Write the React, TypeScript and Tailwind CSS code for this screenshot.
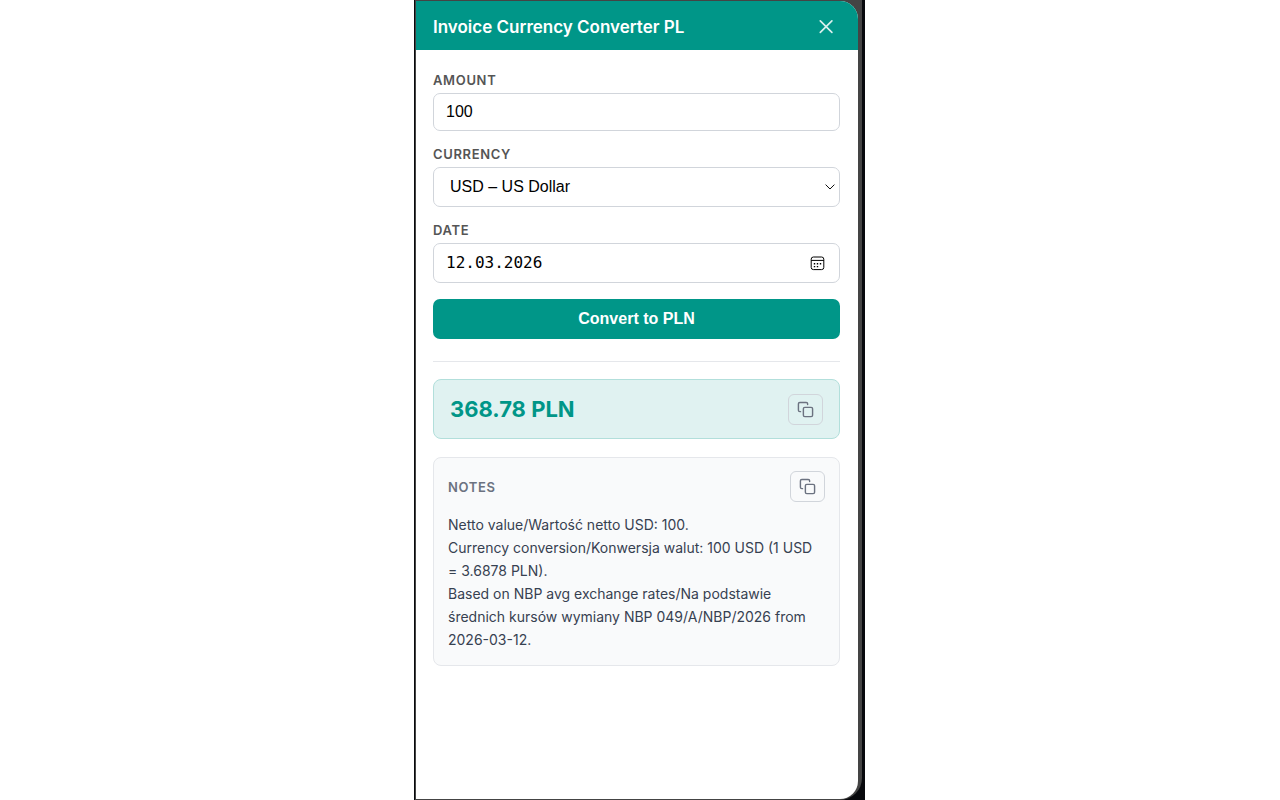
import { useState, type ReactNode } from "react";
import { FiCopy } from "react-icons/fi";

const NOTES = [
  "Netto value/Wartość netto USD: 100.",
  "Currency conversion/Konwersja walut: 100 USD (1 USD = 3.6878 PLN).",
  "Based on NBP avg exchange rates/Na podstawie średnich kursów wymiany NBP 049/A/NBP/2026 from 2026-03-12.",
];

function Field({ id, label, children }: { id: string; label: string; children: ReactNode }) {
  return (
    <div className="flex flex-col gap-[3px]">
      <label htmlFor={id} className="text-[13px] leading-5 font-semibold tracking-wider text-[#555555] uppercase">
        {label}
      </label>
      {children}
    </div>
  );
}

function CopyButton({ label }: { label: string }) {
  return (
    <button
      type="button"
      aria-label={label}
      className="flex h-[31px] w-[35px] shrink-0 items-center justify-center rounded-md border border-[#d1d5db] text-[#6b7280]"
    >
      <FiCopy className="size-[17px]" />
    </button>
  );
}

function CalendarIcon() {
  return (
    <svg viewBox="0 0 15 15" className="size-[15px]" fill="none" stroke="currentColor" aria-hidden="true">
      <rect x="1.2" y="1" width="12.6" height="12.6" rx="2.2" strokeWidth="1" />
      <path d="M1.2 4.4h12.6" strokeWidth="1" />
      <path d="M6.8 7.7h1.4M9.8 7.7h1.4M3.8 7.7h1.4M3.8 10.6h1.4M6.8 10.6h1.4" strokeWidth="1.4" />
    </svg>
  );
}

export default function App() {
  const [amount, setAmount] = useState("100");
  const [currency, setCurrency] = useState("USD");
  const [date, setDate] = useState("12.03.2026");

  return (
    <div className="flex min-h-screen justify-center bg-white pr-px font-['Inter',sans-serif]">
      <div className="flex w-full max-w-[451px] bg-[#08090d] pr-[3px] pl-px">
        <div className="flex w-full rounded-br-[22px] bg-[#444444] pt-px pr-1 pb-px pl-px">
          <main className="flex w-full flex-col overflow-hidden rounded-r-[18px] bg-white">
            <header className="flex h-[49px] items-center justify-between bg-[#009688] pt-[2px] pr-6 pl-[17px]">
              <h1 className="text-[17px] leading-7 font-semibold text-white">Invoice Currency Converter PL</h1>
              <button type="button" aria-label="Close" className="text-[#d9efed]">
                <svg viewBox="0 0 16 16" className="size-4" fill="none" stroke="currentColor" strokeWidth="1.7" strokeLinecap="round" aria-hidden="true">
                  <path d="M2.3 1.8l11.6 11.6M13.9 1.8L2.3 13.4" />
                </svg>
              </button>
            </header>

            <div className="flex flex-col pt-5 pr-[18px] pb-5 pl-[17px]">
              <form className="flex flex-col gap-[13px]" onSubmit={(e) => e.preventDefault()}>
                <Field id="amount" label="Amount">
                  <input
                    id="amount"
                    type="text"
                    inputMode="decimal"
                    value={amount}
                    onChange={(e) => setAmount(e.target.value)}
                    className="h-[38px] w-full rounded-[7px] border border-[#d1d5db] bg-white px-3 font-['Liberation_Sans',sans-serif] text-base text-black"
                  />
                </Field>

                <Field id="currency" label="Currency">
                  <div className="relative">
                    <select
                      id="currency"
                      value={currency}
                      onChange={(e) => setCurrency(e.target.value)}
                      className="block h-10 w-full appearance-none rounded-[7px] border border-[#d1d5db] bg-white px-4 font-['Liberation_Sans',sans-serif] text-base text-black"
                    >
                      <option value="USD">USD – US Dollar</option>
                      <option value="EUR">EUR – Euro</option>
                      <option value="GBP">GBP – British Pound</option>
                    </select>
                    <svg viewBox="0 0 10 6" className="pointer-events-none absolute top-[17px] right-[5px] h-[6px] w-[10px]" fill="none" stroke="#111111" strokeWidth="1" aria-hidden="true">
                      <path d="M0.6 0.6L5 5l4.4-4.4" />
                    </svg>
                  </div>
                </Field>

                <Field id="date" label="Date">
                  <div className="flex h-10 items-center rounded-[7px] border border-[#d1d5db] bg-white pr-[14px] pl-3 text-black">
                    <input
                      id="date"
                      type="text"
                      value={date}
                      onChange={(e) => setDate(e.target.value)}
                      className="w-full min-w-0 font-['DejaVu_Sans_Mono',monospace] text-base outline-none"
                    />
                    <button type="button" aria-label="Open calendar">
                      <CalendarIcon />
                    </button>
                  </div>
                </Field>

                <button
                  type="submit"
                  className="mt-[3px] h-10 rounded-[7px] bg-[#009688] font-['Liberation_Sans',sans-serif] text-base font-bold text-white"
                >
                  Convert to PLN
                </button>
              </form>

              <hr className="mt-[22px] border-[#e5e7eb]" />

              <section className="mt-[17px] flex h-[60px] items-center justify-between rounded-lg border border-[#b2dfdb] bg-[#e0f2f1] px-4">
                <output className="text-[22px] leading-8 font-bold text-[#009688]">368.78 PLN</output>
                <CopyButton label="Copy amount" />
              </section>

              <section className="mt-[18px] rounded-lg border border-[#e5e7eb] bg-[#f9fafb] px-[14px] pt-[13px] pb-[14px]">
                <div className="flex items-center justify-between">
                  <h2 className="text-[13px] leading-5 font-semibold tracking-wider text-[#6b7280] uppercase">Notes</h2>
                  <CopyButton label="Copy notes" />
                </div>
                <div className="mt-[11px] text-sm leading-[23px] text-[#374151]">
                  {NOTES.map((line) => (
                    <p key={line}>{line}</p>
                  ))}
                </div>
              </section>
            </div>
          </main>
        </div>
      </div>
    </div>
  );
}
